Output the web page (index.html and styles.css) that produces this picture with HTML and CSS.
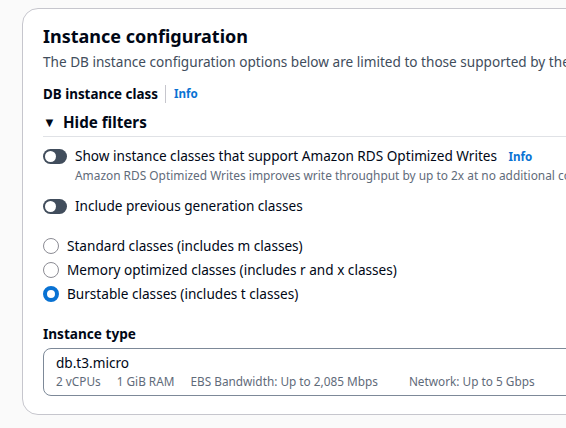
FILE: index.html
```html
<!DOCTYPE html>
<html lang="en">
<head>
<meta charset="utf-8">
<title>Instance configuration</title>
<link rel="stylesheet" href="styles.css">
</head>
<body>
<div class="page">
  <section class="card">
    <h2 class="title">Instance configuration</h2>
    <p class="desc">The DB instance configuration options below are limited to those supported by the engine you selected above.</p>

    <div class="label-row">
      <span class="label">DB instance class</span>
      <span class="divider"></span>
      <a class="info" href="#">Info</a>
    </div>

    <div class="filters-head">
      <span class="caret">&#9660;</span>
      <span class="filters-title">Hide filters</span>
    </div>

    <div class="filters">
      <div class="toggle-row">
        <span class="toggle"><span class="knob"></span></span>
        <div class="toggle-text">
          <div class="toggle-label">Show instance classes that support Amazon RDS Optimized Writes <a class="info info-inline" href="#">Info</a></div>
          <div class="toggle-desc">Amazon RDS Optimized Writes improves write throughput by up to 2x at no additional cost.</div>
        </div>
      </div>

      <div class="toggle-row toggle-row-2">
        <span class="toggle"><span class="knob"></span></span>
        <div class="toggle-text">
          <div class="toggle-label">Include previous generation classes</div>
        </div>
      </div>

      <div class="radios">
        <div class="radio-row"><span class="radio"></span><span class="radio-label">Standard classes (includes m classes)</span></div>
        <div class="radio-row"><span class="radio"></span><span class="radio-label">Memory optimized classes (includes r and x classes)</span></div>
        <div class="radio-row"><span class="radio radio-on"></span><span class="radio-label">Burstable classes (includes t classes)</span></div>
      </div>
    </div>

    <div class="type-label">Instance type</div>
    <div class="select">
      <div class="select-value">db.t3.micro</div>
      <div class="select-meta">
        <span>2 vCPUs</span>
        <span>1 GiB RAM</span>
        <span>EBS Bandwidth: Up to 2,085 Mbps</span>
        <span class="meta-last">Network: Up to 5 Gbps</span>
      </div>
    </div>
  </section>
</div>
</body>
</html>
```

FILE: styles.css
```css
html, body {
  margin: 0;
  padding: 0;
  overflow: hidden;
  background: #fafafa;
}

body {
  font-family: "Noto Sans", "Open Sans", sans-serif;
  color: #000716;
}

.page {
  padding: 8px 0 0 22px;
  width: 700px;
}

.card {
  box-sizing: border-box;
  width: 640px;
  background: #ffffff;
  border: 1px solid #c6c6cd;
  border-radius: 16px;
  padding: 15px 20px 18px 20px;
}

.title {
  margin: 0;
  font-size: 18px;
  line-height: 24px;
  font-weight: 700;
  color: #000716;
}

.desc {
  margin: 4px 0 0 0;
  font-size: 13.6px;
  line-height: 20px;
  color: #414d5c;
  white-space: nowrap;
}

.label-row {
  display: flex;
  align-items: center;
  margin-top: 11px;
  height: 22px;
}

.label {
  font-size: 13.4px;
  font-weight: 700;
  line-height: 20px;
}

.divider {
  width: 1px;
  height: 18px;
  background: #c6c6cd;
  margin: 0 8px 0 7px;
}

.info {
  font-size: 11.6px;
  font-weight: 700;
  color: #0972d3;
  text-decoration: none;
  line-height: 16px;
}

.filters-head {
  display: flex;
  align-items: center;
  margin-top: 5px;
  height: 24px;
  padding-bottom: 2px;
  border-bottom: 1px solid #e0e2e6;
}

.caret {
  font-size: 13px;
  width: 20px;
  margin-left: 0;
  line-height: 24px;
}

.filters-title {
  font-size: 15.2px;
  font-weight: 700;
  line-height: 24px;
}

.filters {
  padding-top: 9px;
}

.toggle-row {
  display: flex;
  align-items: flex-start;
  gap: 8px;
}

.toggle-row-2 {
  margin-top: 13px;
}

.toggle {
  flex: none;
  position: relative;
  width: 24px;
  height: 15px;
  border-radius: 8px;
  background: #414d5c;
  margin-top: 3px;
}

.knob {
  position: absolute;
  left: 2px;
  top: 2px;
  width: 11px;
  height: 11px;
  border-radius: 50%;
  background: #ffffff;
}

.toggle-label {
  font-size: 13.6px;
  line-height: 20px;
  white-space: nowrap;
}

.info-inline {
  margin-left: 8px;
}

.toggle-desc {
  margin-top: 1px;
  font-size: 11.9px;
  line-height: 16px;
  color: #5f6b7a;
  white-space: nowrap;
}

.radios {
  margin-top: 20px;
  display: flex;
  flex-direction: column;
  gap: 4px;
}

.radio-row {
  display: flex;
  align-items: center;
  gap: 8px;
  height: 20px;
}

.radio {
  box-sizing: border-box;
  flex: none;
  width: 16px;
  height: 16px;
  border-radius: 50%;
  border: 1px solid #8c8c94;
  background: #ffffff;
}

.radio-on {
  border: 4px solid #0972d3;
}

.radio-label {
  font-size: 13.6px;
  line-height: 20px;
  white-space: nowrap;
}

.type-label {
  margin-top: 20px;
  font-size: 13.6px;
  font-weight: 700;
  line-height: 20px;
}

.select {
  margin-top: 4px;
  border: 1px solid #7d8998;
  border-radius: 8px;
  padding: 4px 12px 6px 12px;
}

.select-value {
  font-size: 13.6px;
  line-height: 20px;
}

.select-meta {
  display: flex;
  gap: 16px;
  font-size: 11.8px;
  line-height: 16px;
  color: #5f6b7a;
  white-space: nowrap;
}

.meta-last {
  margin-left: 15px;
}
```
